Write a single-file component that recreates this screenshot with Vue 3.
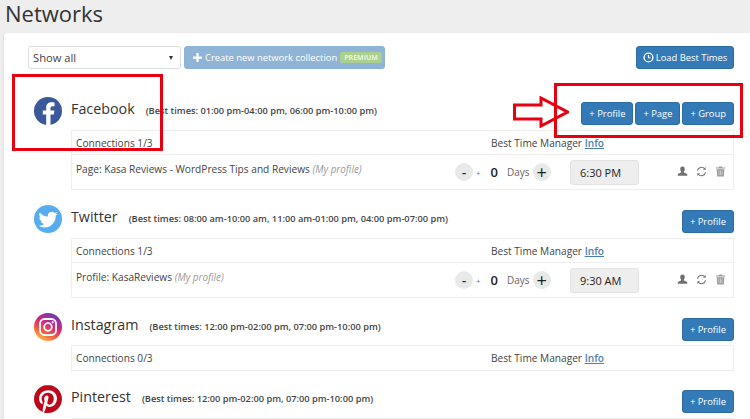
<template>
  <div class="page">
    <h1 class="title">Networks</h1>
    <div class="card">
      <div class="toolbar">
        <div class="select">
          <span>Show all</span>
          <i class="caret"></i>
        </div>
        <button class="btn btn-create">
          <svg class="plus-icon" viewBox="0 0 12 12"><path d="M4.500 0h3v4.500H12v3H7.500V12h-3V7.500H0v-3h4.500z" fill="#fff" /></svg>
          Create new network collection
          <span class="premium">PREMIUM</span>
        </button>
        <button class="btn btn-load">
          <svg class="clock-icon" viewBox="0 0 12 12" fill="none" stroke="#fff">
            <circle cx="6" cy="6" r="4.800" stroke-width="1.500" />
            <path d="M6 3.200V6.300H8.300" stroke-width="1.200" />
          </svg>
          Load Best Times
        </button>
      </div>

      <section v-for="net in networks" :key="net.name" class="network" :class="{ compact: net.count === 0 }">
        <div class="net-head">
          <svg v-if="net.name === 'Facebook'" class="logo" viewBox="0 0 28 28">
            <circle cx="14" cy="14" r="14" fill="#3b5998" />
            <path d="M19 28V17.500h3.300l.6-4H19v-2.400c0-1.200.5-1.900 2-1.900h2V5.500c-.6-.1-1.800-.2-3-.2-3.200 0-5.300 1.900-5.300 5.300v2.900h-3.400v4h3.400V28z" fill="#fff" transform="translate(-2.500 0)" />
          </svg>
          <svg v-else-if="net.name === 'Twitter'" class="logo" viewBox="0 0 28 28">
            <circle cx="14" cy="14" r="14" fill="#55acee" />
            <path transform="translate(4.500 5) scale(.8)" fill="#fff" d="M23.950 4.570a10 10 0 01-2.820.77 4.960 4.960 0 002.160-2.720c-.95.55-2 .95-3.120 1.180a4.920 4.920 0 00-8.380 4.480C7.690 8.100 4.070 6.130 1.640 3.160a4.820 4.820 0 00-.67 2.480c0 1.710.87 3.210 2.190 4.100a4.900 4.900 0 01-2.230-.62v.06a4.920 4.920 0 003.950 4.830 4.900 4.900 0 01-2.210.08 4.940 4.940 0 004.600 3.420A9.870 9.870 0 010 19.540a13.940 13.940 0 007.550 2.210c9.050 0 14-7.500 14-13.980 0-.21 0-.42-.02-.63a9.940 9.940 0 002.460-2.550z" />
          </svg>
          <svg v-else-if="net.name === 'Instagram'" class="logo" viewBox="0 0 28 28">
            <defs>
              <linearGradient id="ig" x1="0.250" y1="1" x2="0.750" y2="0">
                <stop offset="0" stop-color="#fdc04f" />
                <stop offset="0.300" stop-color="#f2603c" />
                <stop offset="0.600" stop-color="#d1257f" />
                <stop offset="1" stop-color="#5b3fb8" />
              </linearGradient>
            </defs>
            <circle cx="14" cy="14" r="14" fill="url(#ig)" />
            <rect x="6" y="6" width="16" height="16" rx="4.500" fill="none" stroke="#fff" stroke-width="1.800" />
            <circle cx="14" cy="14" r="3.800" fill="none" stroke="#fff" stroke-width="1.800" />
            <circle cx="18.700" cy="9.300" r="1.100" fill="#fff" />
          </svg>
          <svg v-else class="logo" viewBox="0 0 24 24">
            <path fill="#bd081c" d="M12.017 0C5.396 0 .029 5.367.029 11.987c0 5.079 3.158 9.417 7.618 11.162-.105-.949-.199-2.403.041-3.439.219-.937 1.406-5.957 1.406-5.957s-.359-.72-.359-1.781c0-1.663.967-2.911 2.168-2.911 1.024 0 1.518.769 1.518 1.688 0 1.029-.653 2.567-.992 3.992-.285 1.193.6 2.165 1.775 2.165 2.128 0 3.768-2.245 3.768-5.487 0-2.861-2.063-4.869-5.008-4.869-3.410 0-5.409 2.562-5.409 5.199 0 1.033.394 2.143.889 2.741.099.12.112.225.085.345-.09.375-.293 1.199-.334 1.363-.053.225-.172.271-.401.165-1.495-.69-2.433-2.878-2.433-4.646 0-3.776 2.748-7.252 7.920-7.252 4.158 0 7.392 2.967 7.392 6.923 0 4.135-2.607 7.462-6.233 7.462-1.214 0-2.354-.629-2.758-1.379l-.749 2.848c-.269 1.045-1.004 2.352-1.498 3.146 1.123.345 2.306.535 3.550.535 6.607 0 11.985-5.365 11.985-11.987C23.970 5.390 18.592.026 11.985.026L12.017 0z" />
          </svg>
          <span class="net-name">{{ net.name }}</span>
          <span class="net-times">(Best times: {{ net.times }})</span>
          <div class="net-actions">
            <button v-for="a in net.actions" :key="a" class="btn btn-add">+ {{ a }}</button>
          </div>
        </div>

        <div class="conn-table">
          <div v-if="net.count !== null" class="conn-head">
            <span class="conn-count">Connections {{ net.count }}/3</span>
            <span>Best Time Manager <a class="info">Info</a></span>
          </div>
          <div v-if="net.account" class="conn-row">
            <div class="conn-name">{{ net.account }} <em>(My profile)</em></div>
            <div class="stepper">
              <span class="round minus">-</span>
              <span class="small-plus">+</span>
              <b class="days-num">0</b>
              <span class="days">Days</span>
              <span class="round plus">+</span>
            </div>
            <div class="time">{{ net.time }}</div>
            <div class="row-icons">
              <svg viewBox="0 0 12 12"><path d="M6 .5c1.700 0 2.500 1.200 2.500 2.800 0 1.100-.4 2.100-1 2.700v1c1.800.6 3.700 1.200 3.700 2.500v1H.8v-1c0-1.300 1.900-1.900 3.700-2.500V6c-.6-.6-1-1.600-1-2.700C3.500 1.700 4.300.5 6 .5z" fill="#6f6f6f" /></svg>
              <svg viewBox="0 0 12 12" fill="none" stroke="#6f6f6f" stroke-width="1.200"><path d="M1.600 5.200A4.500 4.500 0 0 1 9.500 3M10.400 6.800A4.500 4.500 0 0 1 2.500 9" /><path d="M10.500 1v3H7.500zM1.500 11V8h3z" fill="#6f6f6f" stroke="none" /></svg>
              <svg viewBox="0 0 12 12"><path d="M4.500 .5h3l.5 1h3v1.200H1V1.500h3zM1.800 3.500h8.400l-.6 8H2.400z" fill="#9a9a9a" /><path d="M4.200 5v5M6 5v5M7.800 5v5" stroke="#e6e6e6" stroke-width=".7" /></svg>
            </div>
          </div>
        </div>
      </section>
    </div>

    <!-- red annotations drawn over the screenshot -->
    <svg class="arrow" viewBox="0 0 56 32" fill="#fff" stroke="#e8000f" stroke-width="3">
      <path d="M1.500 9H28V2l26.500 14L28 30v-7H1.500z" />
    </svg>
    <div class="mark mark-left"></div>
    <div class="mark mark-right"></div>
  </div>
</template>

<script setup>
const networks = [
  {
    name: 'Facebook',
    times: '01:00 pm-04:00 pm, 06:00 pm-10:00 pm',
    actions: ['Profile', 'Page', 'Group'],
    count: 1,
    account: 'Page: Kasa Reviews - WordPress Tips and Reviews',
    time: '6:30 PM',
  },
  {
    name: 'Twitter',
    times: '08:00 am-10:00 am, 11:00 am-01:00 pm, 04:00 pm-07:00 pm',
    actions: ['Profile'],
    count: 1,
    account: 'Profile: KasaReviews',
    time: '9:30 AM',
  },
  {
    name: 'Instagram',
    times: '12:00 pm-02:00 pm, 07:00 pm-10:00 pm',
    actions: ['Profile'],
    count: 0,
  },
  {
    name: 'Pinterest',
    times: '12:00 pm-02:00 pm, 07:00 pm-10:00 pm',
    actions: ['Profile'],
    count: null, // table is below the fold
  },
];
</script>

<style scoped>
.page {
  position: relative;
  width: 750px;
  height: 419px;
  overflow: hidden;
  background: #eeeeee;
  color: #333;
  font-family: "Open Sans", sans-serif;
  font-size: 10.150px;
}

.title {
  margin: 0;
  height: 33px;
  padding-left: 5px;
  font-size: 22px;
  font-weight: 400;
  line-height: 27px;
}

.card {
  margin-left: 4px;
  padding: 13px 16px 0 24px;
  min-height: 386px;
  background: #fff;
  border-radius: 3px 0 0 0;
  box-shadow: -1px 0 1px #e2e2e2;
}

.toolbar {
  display: flex;
  height: 23px;
  margin-bottom: 28px;
}

.select {
  display: flex;
  align-items: center;
  justify-content: space-between;
  box-sizing: border-box;
  width: 153px;
  padding: 0 7px 0 4px;
  border: 1px solid #dcdcdc;
  border-radius: 3px;
  font-size: 11.200px;
  color: #444;
}

.caret {
  border-left: 2.500px solid transparent;
  border-right: 2.500px solid transparent;
  border-top: 4px solid #333;
}

.btn {
  border: 1px solid #2b6ca3;
  border-radius: 3px;
  background: #337ab7;
  color: #fff;
  font-family: inherit;
  font-size: 9.400px;
  padding: 0;
}

.btn-create {
  display: flex;
  align-items: center;
  width: 201px;
  margin-left: 3px;
  padding-left: 8px;
  border-color: #8db2d4;
  background: #8fb4d6;
  white-space: nowrap;
}

.plus-icon {
  flex: none;
  width: 9px;
  height: 9px;
  margin-right: 3px;
}

.premium {
  margin-left: 3px;
  padding: 1px 4px;
  border-radius: 2px;
  background: #a9d08e;
  color: #e8f4dc;
  font-size: 7px;
  font-weight: 700;
  line-height: 9px;
}

.btn-load {
  display: flex;
  align-items: center;
  justify-content: center;
  width: 98px;
  margin-left: auto;
  white-space: nowrap;
}

.clock-icon {
  flex: none;
  width: 11px;
  height: 11px;
  margin-right: 2px;
}

.network {
  margin-bottom: 15px;
  padding-left: 6px;
}

.network.compact {
  margin-bottom: 14px;
}

.net-head {
  display: flex;
  align-items: flex-start;
  height: 33px;
}

.compact .net-head {
  height: 32px;
}

.logo {
  width: 28px;
  height: 28px;
  flex: none;
  margin-right: 9px;
}

.net-name {
  margin-top: 1px;
  font-size: 14.300px;
  line-height: 21px;
}

.net-times {
  margin: 7px 0 0 11px;
  font-size: 9.250px;
  font-weight: 600;
  line-height: 13px;
  color: #444;
}

.net-actions {
  display: flex;
  gap: 2px;
  margin-left: auto;
  margin-top: 5px;
}

.btn-add {
  height: 23px;
  padding: 0 7px;
}

.conn-table {
  margin-left: 37px;
  border: 1px solid #eeeeee;
}

.conn-head {
  display: flex;
  align-items: center;
  height: 23px;
  padding-left: 4px;
  font-weight: 500;
  color: #444;
}

.compact .conn-head {
  height: 24px;
}

.conn-count {
  width: 415px;
}

.info {
  color: #4a7fb0;
  font-weight: 600;
  text-decoration: underline;
}

.conn-row {
  display: flex;
  align-items: flex-start;
  height: 34px;
  border-top: 1px solid #eeeeee;
}

.conn-name {
  width: 379px;
  flex: none;
  padding: 7px 0 0 4px;
  box-sizing: border-box;
  color: #444;
}

.conn-name em {
  color: #999;
  font-size: 9.900px;
}

.stepper {
  display: flex;
  align-items: center;
  height: 34px;
  width: 119px;
  flex: none;
}

.round {
  display: flex;
  align-items: center;
  justify-content: center;
  width: 18px;
  height: 18px;
  border-radius: 50%;
  background: #e9e9e9;
  color: #222;
  font-size: 18px;
  line-height: 1;
}

.minus {
  margin-left: 4px;
  font-weight: 600;
  font-size: 13px;
}

.small-plus {
  margin-left: 3px;
  font-size: 8px;
  color: #777;
}

.days-num {
  margin-left: 10px;
  font-size: 13px;
  font-weight: 600;
  color: #222;
}

.days {
  margin-left: 9px;
  font-size: 10px;
  color: #666;
}

.round.plus {
  margin-left: 3px;
}

.time {
  box-sizing: border-box;
  flex: none;
  width: 69px;
  height: 25px;
  margin-top: 5px;
  padding-left: 9px;
  border: 1px solid #e2e2e2;
  border-radius: 3px;
  background: #eeeeee;
  font-size: 11px;
  line-height: 23px;
  color: #222;
}

.row-icons {
  display: flex;
  gap: 8px;
  margin: 11px 0 0 38px;
}

.row-icons svg {
  width: 11px;
  height: 11px;
}

.mark {
  position: absolute;
  box-sizing: border-box;
  border: 3px solid #e8000f;
}

.mark-left {
  left: 12px;
  top: 74px;
  width: 151px;
  height: 77px;
}

.mark-right {
  left: 554px;
  top: 83px;
  width: 189px;
  height: 55px;
}

.arrow {
  position: absolute;
  left: 513px;
  top: 96px;
  width: 56px;
  height: 32px;
}
</style>

<style>
body {
  background: #eeeeee;
}
</style>
